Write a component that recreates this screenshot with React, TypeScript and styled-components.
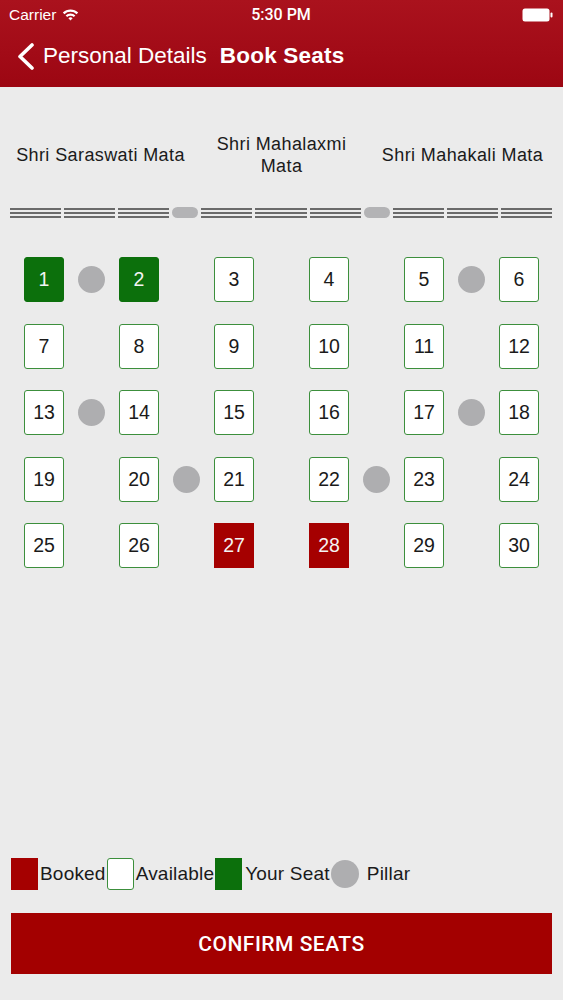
import React from 'react';
import styled, { createGlobalStyle } from 'styled-components';

const GlobalStyle = createGlobalStyle`
  html, body {
    margin: 0;
    padding: 0;
    background: #ebebeb;
  }
  * {
    box-sizing: border-box;
  }
`;

const Page = styled.div`
  display: flex;
  flex-direction: column;
  height: 1000px;
  width: 563px;
  background: #ebebeb;
  font-family: "Liberation Sans", Arial, sans-serif;
  color: #1a1a1a;
`;

const Header = styled.header`
  height: 87px;
  background: linear-gradient(180deg, #aa121d 0%, #a20b17 60%, #9c0612 100%);
  color: #fff;
  display: flex;
  flex-direction: column;
`;

const StatusBar = styled.div`
  height: 29px;
  display: grid;
  grid-template-columns: 1fr auto 1fr;
  align-items: center;
  padding: 0 10px 0 9px;
  font-size: 15.5px;
`;

const StatusLeft = styled.div`
  display: flex;
  align-items: center;
  gap: 6px;
`;

const StatusTime = styled.div`
  font-family: Roboto, "Liberation Sans", sans-serif;
  font-weight: 500;
  font-size: 16px;
`;

const StatusRight = styled.div`
  display: flex;
  justify-content: flex-end;
`;

const NavBar = styled.nav`
  flex: 1;
  display: flex;
  align-items: center;
  padding: 0 0 4px 17px;
  font-size: 22.5px;
`;

const BackLink = styled.div`
  display: flex;
  align-items: center;
  gap: 9px;
`;

const NavTitle = styled.div`
  font-weight: 700;
  margin-left: 13px;
  letter-spacing: 0.2px;
`;

const Deities = styled.div`
  display: grid;
  grid-template-columns: repeat(3, 1fr);
  align-items: center;
  padding: 0 10px;
  margin-top: 46px;
  height: 44px;
`;

const DeityName = styled.div<{ $maxWidth?: number }>`
  justify-self: center;
  text-align: center;
  font-size: 18px;
  letter-spacing: 0.4px;
  line-height: 22px;
  white-space: ${p => (p.$maxWidth ? 'normal' : 'nowrap')};
  max-width: ${p => (p.$maxWidth ? `${p.$maxWidth}px` : 'none')};
`;

const Stage = styled.div`
  display: flex;
  align-items: center;
  gap: 3px;
  padding: 0 11px 0 10px;
  margin-top: 30px;
  height: 11px;
`;

const StageSegment = styled.div`
  flex: 1;
  height: 10px;
  background: repeating-linear-gradient(
    180deg,
    #6a6a6a 0px,
    #6a6a6a 2px,
    transparent 2px,
    transparent 4px
  );
`;

const StagePillar = styled.div`
  width: 26px;
  height: 11px;
  border-radius: 6px;
  background: #b3b3b5;
`;

const SeatGrid = styled.div`
  display: grid;
  grid-template-columns: 40px 55px 40px 55px 40px 55px 40px 55px 40px 55px 40px;
  grid-auto-rows: 45px;
  row-gap: 21.5px;
  margin: 39px 0 0 24px;
`;

type SeatState = 'mine' | 'free' | 'booked';

const Seat = styled.div<{ $state: SeatState }>`
  display: flex;
  align-items: center;
  justify-content: center;
  font-size: 19.5px;
  border-radius: ${p => (p.$state === 'booked' ? '0' : '3px')};
  border: 1.5px solid ${p =>
    p.$state === 'booked' ? '#a50000' : p.$state === 'mine' ? '#0c700c' : '#3c8f3c'};
  background: ${p =>
    p.$state === 'booked' ? '#a50000' : p.$state === 'mine' ? '#0c700c' : '#ffffff'};
  color: ${p => (p.$state === 'free' ? '#1a1a1a' : '#f4f4f4')};
`;

const Gap = styled.div`
  display: flex;
  align-items: center;
  justify-content: center;
`;

const Pillar = styled.div<{ $size?: number }>`
  width: ${p => p.$size ?? 27}px;
  height: ${p => p.$size ?? 27}px;
  border-radius: 50%;
  background: #aeaeb0;
  flex-shrink: 0;
`;

const Spacer = styled.div`
  flex: 1;
`;

const Legend = styled.div`
  display: flex;
  align-items: center;
  padding: 0 11px;
  height: 32px;
  font-size: 19px;
  letter-spacing: 0.2px;
`;

const LegendSwatch = styled.div<{ $state: SeatState }>`
  width: 27px;
  height: 32px;
  border-radius: ${p => (p.$state === 'free' ? '3px' : '0')};
  border: ${p => (p.$state === 'free' ? '1.5px solid #3c8f3c' : 'none')};
  background: ${p =>
    p.$state === 'booked' ? '#a50000' : p.$state === 'mine' ? '#0c700c' : '#ffffff'};
  flex-shrink: 0;
`;

const LegendLabel = styled.span<{ $pad?: number }>`
  margin: 0 1px 0 ${p => p.$pad ?? 2}px;
`;

const ConfirmButton = styled.button`
  margin: 23px 11px 26px;
  height: 61px;
  border: none;
  background: #a30000;
  color: #fff;
  font-family: Roboto, "Liberation Sans", Arial, sans-serif;
  font-size: 21px;
  font-weight: 500;
  letter-spacing: 0.5px;
  cursor: pointer;
`;

const WifiIcon = () => (
  <svg width="17" height="13" viewBox="0 0 17 13">
    <path d="M0.8 4.6 A11 11 0 0 1 16.2 4.6 L14.6 6.2 A8.7 8.7 0 0 0 2.4 6.2 Z" fill="#fff" />
    <path d="M3.6 7.4 A7 7 0 0 1 13.4 7.4 L11.8 9 A4.7 4.7 0 0 0 5.2 9 Z" fill="#fff" />
    <path d="M6.4 10.2 A3 3 0 0 1 10.6 10.2 L8.5 12.4 Z" fill="#fff" />
  </svg>
);

const BatteryIcon = () => (
  <svg width="31" height="14" viewBox="0 0 31 14">
    <rect x="0.5" y="0.5" width="27" height="13" rx="2.5" fill="#fff" />
    <rect x="28.5" y="4.5" width="2" height="5" rx="1" fill="#fff" />
  </svg>
);

const BackChevron = () => (
  <svg width="17" height="27" viewBox="0 0 17 27">
    <path d="M15 2 L3 13.5 L15 25" stroke="#fff" strokeWidth="3.6" fill="none" strokeLinecap="round" strokeLinejoin="round" />
  </svg>
);

const booked = [27, 28];
const mine = [1, 2];

// pillar positions: row index -> gap indexes (0..4) holding a pillar
const pillars: Record<number, number[]> = {
  0: [0, 4],
  2: [0, 4],
  3: [1, 3],
};

const seatState = (n: number): SeatState =>
  booked.includes(n) ? 'booked' : mine.includes(n) ? 'mine' : 'free';

const App = () => {
  const rows = [0, 1, 2, 3, 4];

  return (
    <Page>
      <GlobalStyle />
      <Header>
        <StatusBar>
          <StatusLeft>
            <span>Carrier</span>
            <WifiIcon />
          </StatusLeft>
          <StatusTime>5:30 PM</StatusTime>
          <StatusRight>
            <BatteryIcon />
          </StatusRight>
        </StatusBar>
        <NavBar>
          <BackLink>
            <BackChevron />
            <span>Personal Details</span>
          </BackLink>
          <NavTitle>Book Seats</NavTitle>
        </NavBar>
      </Header>

      <Deities>
        <DeityName>Shri Saraswati Mata</DeityName>
        <DeityName $maxWidth={150}>Shri Mahalaxmi Mata</DeityName>
        <DeityName>Shri Mahakali Mata</DeityName>
      </Deities>

      <Stage>
        <StageSegment />
        <StageSegment />
        <StageSegment />
        <StagePillar />
        <StageSegment />
        <StageSegment />
        <StageSegment />
        <StagePillar />
        <StageSegment />
        <StageSegment />
        <StageSegment />
      </Stage>

      <SeatGrid>
        {rows.map(r =>
          [0, 1, 2, 3, 4, 5].map(c => {
            const n = r * 6 + c + 1;
            return (
              <React.Fragment key={n}>
                <Seat $state={seatState(n)}>{n}</Seat>
                {c < 5 && (
                  <Gap>{(pillars[r] || []).includes(c) && <Pillar />}</Gap>
                )}
              </React.Fragment>
            );
          })
        )}
      </SeatGrid>

      <Spacer />

      <Legend>
        <LegendSwatch $state="booked" />
        <LegendLabel>Booked</LegendLabel>
        <LegendSwatch $state="free" />
        <LegendLabel>Available</LegendLabel>
        <LegendSwatch $state="mine" />
        <LegendLabel $pad={3}>Your Seat</LegendLabel>
        <Pillar $size={28} />
        <LegendLabel $pad={8}>Pillar</LegendLabel>
      </Legend>

      <ConfirmButton>CONFIRM SEATS</ConfirmButton>
    </Page>
  );
};

export default App;
